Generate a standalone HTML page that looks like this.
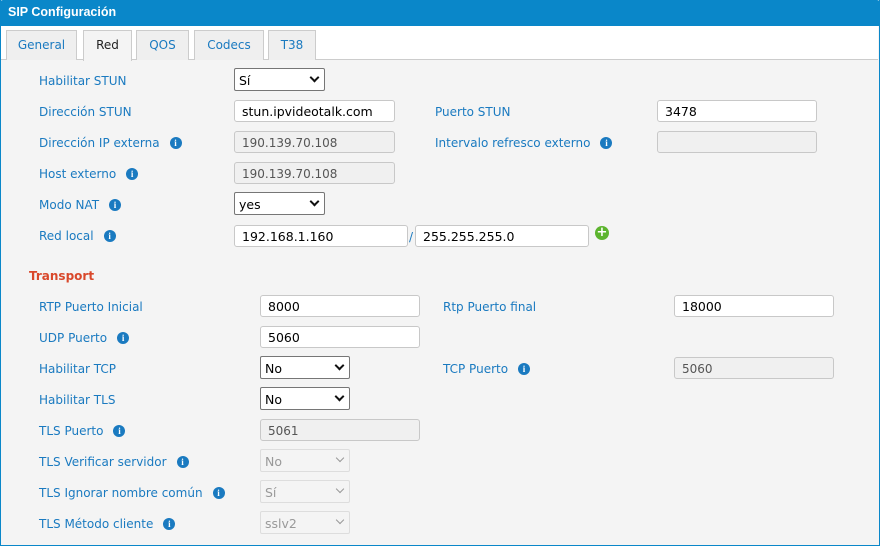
<!DOCTYPE html>
<html><head><meta charset="utf-8"><style>
*{box-sizing:border-box;margin:0;padding:0}
body{width:880px;height:546px;overflow:hidden;background:#fff;font-family:"DejaVu Sans","Liberation Sans",sans-serif;font-size:12px}
#f{position:absolute;left:0;top:0;width:880px;height:546px;border:1px solid #0a87c9;border-top:none;background:#f4f4f4}
#h{position:absolute;left:0;top:0;width:880px;height:26px;background:#0a87c9;color:#fff;font-weight:bold;font-size:12.5px;padding:5px 8px;font-family:"Liberation Sans",sans-serif;border-radius:3px 3px 0 0}
#tabs{position:absolute;left:1px;top:26px;width:877px;height:34px;background:#fff;border-bottom:1px solid #ccc}
.t{position:absolute;top:4px;height:30px;border:1px solid #ccc;border-bottom:none;background:#efefef;color:#1a7ac0;text-align:center;line-height:29px}
.t.a{background:#f4f4f4;color:#222;height:31px}
.l{position:absolute;color:#1a7ac0;white-space:nowrap;line-height:14px;margin-top:1px}
.i{display:inline-block;width:12px;height:12px;border-radius:50%;background:#1a7ac0;color:#fff;font-size:9px;font-weight:bold;text-align:center;line-height:12px;font-family:"Liberation Serif",serif;vertical-align:1px;margin-left:10px}
.in{position:absolute;height:22px;border:1px solid #c8c8c8;border-radius:3px;background:#fff;padding:3px 7px;line-height:16px;color:#000;font-size:12.5px}
.in.d{background:#f0f0f0;color:#555;font-size:12px}
.s{position:absolute;height:23px;border:1px solid #767676;border-radius:2px;background:#fff;padding:4px 4px;line-height:15px;color:#000;font-size:12.5px}
.s:after{content:"";position:absolute;right:6px;top:5px;width:5px;height:5px;border-right:2px solid #111;border-bottom:2px solid #111;transform:rotate(45deg)}
.s.d{border-color:#ddd;color:#999;background:#f4f4f4}
.s.d:after{border-color:#999;border-width:1.5px}
</style></head><body>
<div id="f"></div>
<div id="h">SIP Configuración</div>
<div id="tabs">
<div class="t" style="left:5px;width:71px">General</div>
<div class="t a" style="left:82px;width:49px">Red</div>
<div class="t" style="left:135px;width:53px">QOS</div>
<div class="t" style="left:193px;width:70px">Codecs</div>
<div class="t" style="left:267px;width:48px">T38</div>
</div>

<div class="l" style="left:39px;top:73px">Habilitar STUN</div>
<div class="s" style="left:234px;top:68px;width:91px">Sí</div>
<div class="l" style="left:39px;top:104px">Dirección STUN</div>
<div class="in" style="left:234px;top:100px;width:161px">stun.ipvideotalk.com</div>
<div class="l" style="left:435px;top:104px">Puerto STUN</div>
<div class="in" style="left:657px;top:100px;width:160px">3478</div>
<div class="l" style="left:39px;top:135px">Dirección IP externa<span class="i">i</span></div>
<div class="in d" style="left:234px;top:131px;width:161px">190.139.70.108</div>
<div class="l" style="left:435px;top:135px">Intervalo refresco externo<span class="i">i</span></div>
<div class="in d" style="left:657px;top:131px;width:160px"></div>
<div class="l" style="left:39px;top:166px">Host externo<span class="i">i</span></div>
<div class="in d" style="left:234px;top:162px;width:161px">190.139.70.108</div>
<div class="l" style="left:39px;top:197px">Modo NAT<span class="i">i</span></div>
<div class="s" style="left:234px;top:192px;width:91px">yes</div>
<div class="l" style="left:39px;top:228px">Red local<span class="i">i</span></div>
<div class="in" style="left:234px;top:225px;width:174px">192.168.1.160</div>
<div class="l" style="left:409px;top:229px">/</div>
<div class="in" style="left:415px;top:225px;width:174px">255.255.255.0</div>
<div style="position:absolute;left:595px;top:226px;width:14px;height:14px;border-radius:50%;background:#5cb42e;color:#fff;font-weight:bold;font-size:13px;line-height:14px;text-align:center">+</div>

<div class="l" style="left:29px;top:268px;color:#d9482b;font-weight:bold">Transport</div>

<div class="l" style="left:39px;top:299px">RTP Puerto Inicial</div>
<div class="in" style="left:260px;top:295px;width:160px">8000</div>
<div class="l" style="left:443px;top:299px">Rtp Puerto final</div>
<div class="in" style="left:674px;top:295px;width:160px">18000</div>
<div class="l" style="left:39px;top:330px">UDP Puerto<span class="i">i</span></div>
<div class="in" style="left:260px;top:326px;width:160px">5060</div>
<div class="l" style="left:39px;top:361px">Habilitar TCP</div>
<div class="s" style="left:260px;top:356px;width:90px">No</div>
<div class="l" style="left:443px;top:361px">TCP Puerto<span class="i">i</span></div>
<div class="in d" style="left:674px;top:357px;width:160px">5060</div>
<div class="l" style="left:39px;top:392px">Habilitar TLS</div>
<div class="s" style="left:260px;top:387px;width:90px">No</div>
<div class="l" style="left:39px;top:423px">TLS Puerto<span class="i">i</span></div>
<div class="in d" style="left:260px;top:419px;width:160px">5061</div>
<div class="l" style="left:39px;top:454px">TLS Verificar servidor<span class="i">i</span></div>
<div class="s d" style="left:260px;top:449px;width:90px">No</div>
<div class="l" style="left:39px;top:485px">TLS Ignorar nombre común<span class="i">i</span></div>
<div class="s d" style="left:260px;top:480px;width:90px">Sí</div>
<div class="l" style="left:39px;top:516px">TLS Método cliente<span class="i">i</span></div>
<div class="s d" style="left:260px;top:511px;width:90px">sslv2</div>
</body></html>
